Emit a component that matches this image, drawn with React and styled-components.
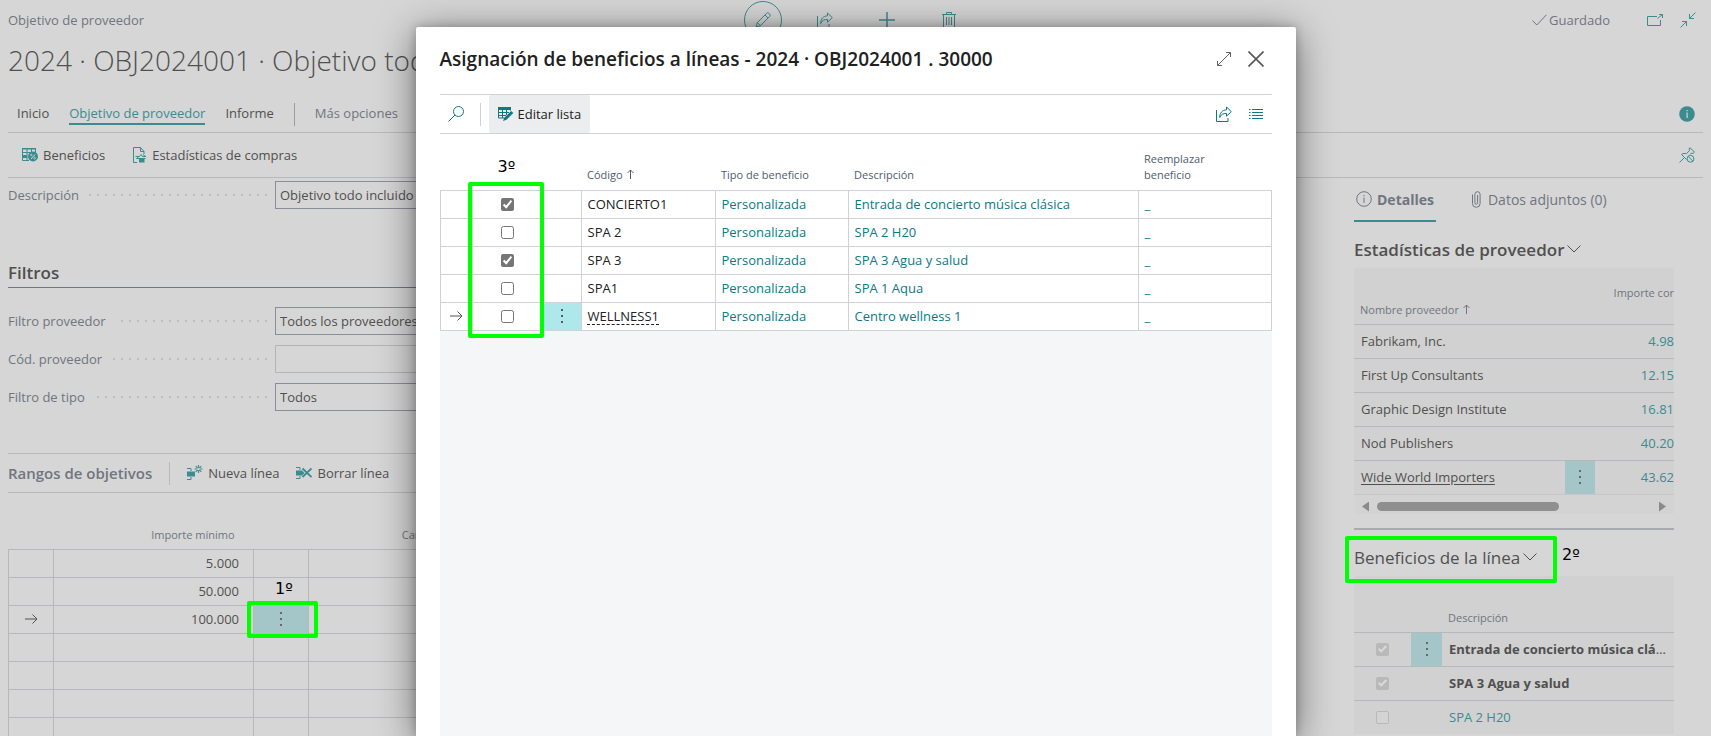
import React from "react";
import styled, { createGlobalStyle, css } from "styled-components";

const c = {
  page: "#d6d6d6",
  panel: "#d1d1d1",
  text: "#505050",
  muted: "#70757f",
  line: "#b9b9bc",
  grid: "#b7b8bd",
  teal: "#3c8b90",
  cell: "#a5c6c9",
  ink: "#212121",
  modalTeal: "#0b7a82",
  modalMuted: "#505c6d",
  modalLine: "#d0d2d8",
  mark: "#00ff00",
};

const GlobalStyle = createGlobalStyle`
  *, *::before, *::after { box-sizing: border-box; }
  body { margin: 0; background: ${c.page}; overflow: hidden; }
  body, button, input, select { font-family: "Open Sans", "Noto Sans", sans-serif; font-size: 13px; }
  button { border: 0; padding: 0; background: none; color: inherit; cursor: pointer; }
  svg { display: block; flex: none; }
`;

/* ---------- icons ---------- */

const Svg = ({ size = 16, w, h, sw = 1, children, ...rest }) => (
  <svg
    width={w || size}
    height={h || size}
    viewBox={`0 0 ${w || size} ${h || size}`}
    fill="none"
    stroke="currentColor"
    strokeWidth={sw}
    aria-hidden="true"
    {...rest}
  >
    {children}
  </svg>
);

const PencilIcon = () => (
  <Svg>
    <path d="M1 15l1.300-4.400L11.600 1.300a1.600 1.600 0 0 1 2.300 0l.8.8a1.600 1.600 0 0 1 0 2.300L5.400 13.700zM2.300 10.600l3.100 3.100M10 3l3 3" />
  </Svg>
);
const ShareIcon = () => (
  <Svg>
    <path d="M.5 4v11.5h11.5V12M10.500 1l4.800 4.600-4.800 4.600V7.500C7 7.300 5 8.500 3.700 11.500 3.700 7 6 4.200 10.500 3.800z" />
  </Svg>
);
const PlusIcon = () => (
  <Svg sw="1.5"><path d="M8 0v16M0 8h16" /></Svg>
);
const TrashIcon = () => (
  <Svg w={14} h={16}>
    <path d="M0 2.500h14M4.500 2.500v-2h5v2M1.500 2.500v13h11v-13M4.500 5v8M7 5v8M9.500 5v8" />
  </Svg>
);
const CheckIcon = () => (
  <Svg w={15} h={12}><path d="M.5 6.500L4.800 11 14.500.700" /></Svg>
);
const PopoutIcon = () => (
  <Svg>
    <path d="M10 4.500H.5v9h13V8M10.500 6.500l5-4M12 2.500h3.500V6" />
  </Svg>
);
const CollapseIcon = () => (
  <Svg>
    <path d="M15.500.5l-6 6M9.500 2v4.500H14M.5 15.500l6-6M2 9.500h4.500V14" />
  </Svg>
);
const InfoSolidIcon = () => (
  <Svg stroke="none">
    <circle cx="8" cy="8" r="7.800" fill="currentColor" />
    <path d="M7.500 4h1.200v1.300H7.500zM7.500 6.500h1.200V12H7.500z" fill={c.page} />
  </Svg>
);
const PinIcon = () => (
  <Svg>
    <path d="M.5 15.500l5-5M2.500 7.500l3.500 3.500M2.500 7.500C4 6.300 6 6.200 7.500 6.700L10.500 3.500 10 2l1-1.300 4.500 4.500L14 6.500l-1.500-.5L11 7.500M6 11l1.500 1.500" />
    <circle cx="11.500" cy="11.800" r="3.400" />
    <path d="M9.200 9.500l4.700 4.600" />
  </Svg>
);
const BenefitIcon = () => (
  <Svg>
    <path d="M.5 1.500h13V6M.5 1.500v12H7M.5 5.500h9M5 1.500v12M9.500 1.500v4" />
    <path d="M0 8h5v3H0zM0 1h14v1.500H0z" fill="currentColor" stroke="none" />
    <circle cx="11" cy="9.500" r="5" fill="currentColor" stroke="none" />
    <path d="M13 7.500l-4 4.500" stroke={c.page} />
    <circle cx="9.300" cy="8" r=".8" stroke={c.page} strokeWidth=".7" />
    <circle cx="12.700" cy="11.200" r=".8" stroke={c.page} strokeWidth=".7" />
  </Svg>
);
const ReportIcon = () => (
  <Svg w={14} h={16}>
    <path d="M4 15.500H.5V.5h7l3.500 4V7M7.500.5v4H11M2.500 9.500h4l1.500-2 1.500 2H13M10 7.500l2.500 2M5.500 10l-2 1.500h9" />
    <path d="M6 12h5.500v3.500H6z" fill="currentColor" stroke="none" />
  </Svg>
);
const NewLineIcon = () => (
  <Svg>
    <path d="M0 3.500h4V6M0 14.500h4V12" />
    <path d="M0 6.500h8v5H0z" fill="currentColor" stroke="none" />
    <path d="M11.500 0v8M7.500 4h8M8.700 1.200l5.600 5.600M14.300 1.200L8.700 6.800" strokeWidth="1.200" />
    <circle cx="11.500" cy="4" r="1.300" fill={c.page} stroke="none" />
  </Svg>
);
const DeleteLineIcon = () => (
  <Svg>
    <path d="M0 2.500h4V5M0 13.500h4V11" />
    <path d="M0 5.500h6l2.500 2.500L6 10.500H0z" fill="currentColor" stroke="none" />
    <path d="M6.500 3.500l9 8.500M15.500 3.500l-9 8.500" strokeWidth="1.800" />
  </Svg>
);
const SearchIcon = () => (
  <Svg>
    <circle cx="10.500" cy="5.500" r="5" />
    <path d="M7 9L.5 15.500" />
  </Svg>
);
const EditListIcon = () => (
  <Svg>
    <path d="M.5 1.500v10.500H6.500M.5 6.500H11M.5 9.500H8M4.500 4v8M8.500 4v5M12.500 1v3.500" />
    <path d="M0 1h13v3H0z" fill="currentColor" stroke="none" />
    <path d="M13.200 5L15.300 7 8.500 13.800l-3.500 1.200 1.300-3.300z" fill="currentColor" stroke="none" />
  </Svg>
);
const ListIcon = () => (
  <Svg>
    <path d="M1 3.500h1.500M4 3.500h11M1 6.500h1.500M4 6.500h11M1 9.500h1.500M4 9.500h11M1 12.500h1.500M4 12.500h11" />
  </Svg>
);
const ExpandIcon = () => (
  <Svg><path d="M1.500 14.500L14.500 1.500M10 1.500h4.500V6M1.500 10v4.500H6" /></Svg>
);
const CloseIcon = () => (
  <Svg sw="1.600"><path d="M.5.5l15 15M15.500.5l-15 15" /></Svg>
);
const ArrowIcon = () => (
  <Svg w={13} h={10}><path d="M0 5h12M7.500.5L12 5 7.500 9.500" /></Svg>
);
const SortIcon = () => (
  <Svg w={7} h={10}><path d="M3.500 10V1M.5 4l3-3 3 3" /></Svg>
);
const ChevronIcon = () => (
  <Svg w={14} h={8}><path d="M.5.5L7 7 13.500.5" /></Svg>
);
const InfoIcon = () => (
  <Svg>
    <circle cx="8" cy="8" r="7.300" />
    <path d="M8 4v1.300M8 6.500V12" />
  </Svg>
);
const ClipIcon = () => (
  <Svg w={9} h={17}>
    <path d="M.5 3.500v9a3.800 3.800 0 0 0 7.600 0V3.300a2.600 2.600 0 0 0-5.200 0v8.500a1.300 1.300 0 0 0 2.700 0V4" />
  </Svg>
);
const DotsIcon = () => (
  <Svg w={2} h={14} stroke="none" fill="currentColor">
    <path d="M0 0h2v2H0zM0 6h2v2H0zM0 12h2v2H0z" />
  </Svg>
);

/* ---------- page behind the dialog ---------- */

const Shell = styled.div`
  position: relative;
  height: 100vh;
  overflow: hidden;
  background: ${c.page};
  color: ${c.text};
`;

const Page = styled.div`
  display: flex;
  flex-direction: column;
  height: 100%;
  padding: 0 8px;
`;

const TopBar = styled.header`
  display: flex;
  align-items: center;
  height: 40px;
  flex: none;
  color: ${c.muted};
`;

const Side = styled.div`
  flex: 1;
  display: flex;
  align-items: center;
  gap: 17px;
  justify-content: ${(p) => (p.$end ? "flex-end" : "flex-start")};
  padding-right: 7px;
`;

const PageActions = styled.div`
  display: flex;
  align-items: center;
  gap: 24px;
`;

const IconButton = styled.button`
  display: flex;
  align-items: center;
  justify-content: center;
  width: ${(p) => p.$size || 16}px;
  height: ${(p) => p.$size || 16}px;
  color: ${(p) => p.$color || c.teal};
  ${(p) => p.$ring && css`
    border: 1px solid ${c.teal};
    border-radius: 50%;
  `}
`;

const Saved = styled.span`
  display: flex;
  align-items: center;
  gap: 2px;
  margin-right: 20px;
`;

const PageTitle = styled.h1`
  margin: 0;
  height: 56px;
  flex: none;
  font-size: 28px;
  font-weight: 300;
  line-height: 40px;
  white-space: nowrap;
`;

const TabBar = styled.nav`
  display: flex;
  align-items: center;
  height: 37px;
  flex: none;
  padding: 0 8px 0 9px;
  border-bottom: 1px solid ${c.line};
  gap: 20px;
`;

const Tab = styled.a`
  color: ${(p) => (p.$active ? c.teal : p.$quiet ? c.muted : c.text)};
  text-decoration: none;
  line-height: 20px;
  border-bottom: 2px solid ${(p) => (p.$active ? c.teal : "transparent")};
  &:last-of-type { margin-right: auto; }
`;

const Separator = styled.span`
  width: 1px;
  height: 23px;
  background: ${(p) => p.$color || c.line};
`;

const ActionBar = styled.div`
  display: flex;
  align-items: center;
  height: 45px;
  flex: none;
  padding: 0 8px 0 14px;
  gap: 28px;
  border-bottom: 1px solid ${c.line};
  & > :last-child { margin-left: auto; }
`;

const Action = styled.button`
  display: flex;
  align-items: center;
  gap: 5px;
  white-space: nowrap;
  svg { color: ${c.teal}; }
`;

const Body = styled.div`
  display: flex;
  flex: 1;
  min-height: 0;
  gap: 64px;
  padding-right: 29px;
`;

const Main = styled.main`
  flex: 1;
  min-width: 0;
  overflow: hidden;
`;

const Fields = styled.div`
  display: flex;
  flex-direction: column;
  gap: 10px;
  width: 50%;
  padding-top: ${(p) => p.$top}px;
`;

const Field = styled.div`
  display: flex;
  align-items: center;
  height: 28px;
`;

const FieldLabel = styled.label`
  display: flex;
  align-items: center;
  gap: 10px;
  width: 267px;
  padding-right: 8px;
  color: ${c.muted};
  &::after {
    content: "";
    flex: 1;
    height: 2px;
    background: repeating-linear-gradient(270deg, #bcbcbc 0 2px, transparent 2px 8px);
  }
`;

const control = css`
  flex: 1;
  min-width: 0;
  height: 28px;
  padding: 0 4px;
  border: 1px solid ${(p) => (p.$empty ? "#b4b5b8" : "#8a8e96")};
  border-radius: 0;
  background: transparent;
  color: ${c.text};
  appearance: none;
`;
const TextInput = styled.input`${control}`;
const Select = styled.select`${control}`;

const GroupTitle = styled.h2`
  margin: 52px 0 0;
  padding-bottom: 2px;
  font-size: 17px;
  font-weight: 600;
  line-height: 24px;
  color: ${c.text};
  border-bottom: 1px solid ${c.muted};
`;

const PartBar = styled.div`
  display: flex;
  align-items: center;
  height: 40px;
  margin-top: 42px;
  border-top: 1px solid ${c.line};
  border-bottom: 1px solid ${c.line};
  gap: 17px;
`;

const PartTitle = styled.h2`
  margin: 0;
  font-size: 15px;
  font-weight: 600;
  color: ${c.muted};
`;

const RangeTable = styled.table`
  width: 1300px;
  table-layout: fixed;
  border-collapse: collapse;
  th {
    height: 56px;
    padding: 0 19px 7px 8px;
    vertical-align: bottom;
    text-align: right;
    font-size: 11px;
    font-weight: 400;
    color: ${c.muted};
  }
  td {
    height: 28px;
    padding: 0 14px;
    border: 1px solid ${c.grid};
    text-align: right;
  }
  td:first-child svg { margin: 0 auto; }
`;

const MenuCell = styled.td`
  && {
    position: relative;
    padding: 0;
    background: ${(p) => (p.$on ? p.$tone || c.cell : "transparent")};
  }
`;

const MenuButton = styled.button`
  display: flex;
  align-items: center;
  justify-content: center;
  width: 100%;
  height: 27px;
  color: ${(p) => p.$color || "#686868"};
`;

/* ---------- fact boxes ---------- */

const Facts = styled.aside`
  width: 320px;
  flex: none;
`;

const FactTabs = styled.div`
  display: flex;
  gap: 34px;
`;

const FactTab = styled.button`
  display: flex;
  align-items: center;
  gap: ${(p) => (p.$active ? 5 : 7)}px;
  height: 44px;
  padding: 0 2px;
  border-bottom: 2px solid ${(p) => (p.$active ? c.teal : "transparent")};
  font-size: 14px;
  font-weight: ${(p) => (p.$active ? 700 : 400)};
  color: ${c.muted};
  white-space: nowrap;
`;

const FactHeading = styled.div`
  position: relative;
  display: flex;
  align-items: center;
  height: 46px;
  padding-top: 8px;
  h2 {
    margin: 0;
    font-size: 17px;
    font-weight: ${(p) => p.$weight};
    white-space: nowrap;
  }
  button {
    display: flex;
    align-items: center;
    gap: 3px;
    color: ${c.text};
  }
`;

const FactTable = styled.table`
  width: 100%;
  table-layout: fixed;
  border-collapse: collapse;
  background: ${c.panel};
  th {
    height: 56px;
    padding: 0 6px 7px;
    vertical-align: bottom;
    text-align: left;
    font-size: 11px;
    font-weight: 400;
    color: ${c.muted};
    white-space: nowrap;
    svg { display: inline; margin-left: 1px; }
  }
  th.num { padding: 0 0 24px; text-align: right; }
  td {
    height: 34px;
    padding: 0 4px 0 7px;
    border-top: 1px solid ${c.grid};
    overflow: hidden;
    text-overflow: ellipsis;
    white-space: nowrap;
  }
  td.num { padding-right: 0; text-align: right; color: ${c.teal}; }
  td.check { padding: 0; }
  ${MenuButton} { height: 33px; }
  a { color: inherit; text-underline-offset: 2px; }
`;

const LockedCheck = styled.input`
  display: block;
  position: relative;
  width: 13px;
  height: 13px;
  margin: 0 auto;
  appearance: none;
  border: 1px solid #b9b9b9;
  border-radius: 2px;
  background: #d4d4d4;
  &:checked { background: #b9b9b9; }
  &:checked::before {
    content: "";
    position: absolute;
    inset: 1px;
    background: #dadada;
    clip-path: polygon(0 55%, 16% 38%, 36% 60%, 84% 8%, 100% 24%, 36% 92%);
  }
`;

const Strong = styled.strong`
  font-weight: 700;
`;
const TealText = styled.a`
  && { color: ${c.teal}; text-decoration: none; }
`;

const ScrollRow = styled.div`
  display: flex;
  align-items: center;
  height: 20px;
  padding: 4px 8px 0;
  gap: 8px;
  background: #d3d3d3;
  border-top: 1px solid #c6c6c8;
`;
const ScrollThumb = styled.div`
  width: 182px;
  height: 9px;
  margin-right: auto;
  border-radius: 5px;
  background: #8f8f8f;
`;
const ScrollArrow = styled.button`
  width: 7px;
  height: 10px;
  background: #8a8a8a;
  clip-path: ${(p) => (p.$right ? "polygon(0 0, 100% 50%, 0 100%)" : "polygon(100% 0, 0 50%, 100% 100%)")};
`;

const FactRule = styled.div`
  height: 2px;
  margin-top: 14px;
  background: #a8abb0;
`;

/* ---------- dialog ---------- */

const Dialog = styled.section`
  position: absolute;
  top: 27px;
  left: 50%;
  bottom: 0;
  width: 880px;
  margin-left: -440px;
  display: flex;
  flex-direction: column;
  padding: 0 24px;
  background: #fff;
  color: ${c.ink};
  border-radius: 2px 2px 0 0;
  box-shadow: 0 6px 38px rgba(0, 0, 0, 0.5), 0 0 10px rgba(0, 0, 0, 0.22);
`;

const DialogHead = styled.div`
  display: flex;
  align-items: center;
  height: 67px;
  flex: none;
  padding: 0 8px 3px 0;
  gap: 16px;
  h2 {
    flex: 1;
    margin: 0;
    font-size: 19px;
    font-weight: 600;
    white-space: nowrap;
  }
`;

const DialogTools = styled.div`
  display: flex;
  align-items: center;
  height: 40px;
  flex: none;
  padding: 0 8px;
  gap: 16px;
  border-top: 1px solid ${c.modalLine};
  border-bottom: 1px solid ${c.modalLine};
`;

const EditButton = styled.button`
  display: flex;
  align-items: center;
  gap: 4px;
  height: 38px;
  margin: 0 auto 0 -8px;
  padding: 0 9px;
  background: #ebedef;
  border-radius: 2px;
  white-space: nowrap;
  svg { color: ${c.modalTeal}; }
`;

const DialogBody = styled.div`
  position: relative;
  flex: 1;
  background: #f5f6f8;
`;

const BenefitTable = styled.table`
  width: 100%;
  table-layout: fixed;
  border-collapse: collapse;
  background: #fff;
  th {
    height: 56px;
    padding: 0 6px 7px;
    vertical-align: bottom;
    text-align: left;
    font-size: 11px;
    line-height: 16px;
    font-weight: 400;
    color: ${c.modalMuted};
    svg { display: inline; margin-left: 1px; }
  }
  td {
    height: 28px;
    padding: 0 6px;
    border: 1px solid ${c.modalLine};
    white-space: nowrap;
  }
  td.check { padding: 0; border-right: 0; }
  td.check input { display: block; margin: 0 auto; accent-color: #767676; }
  td.check + td { border-left: 0; }
  td:first-child { padding: 0; color: #555; }
  td:first-child svg { margin: 0 auto; }
`;

const CellLink = styled.a`
  color: ${c.modalTeal};
  text-decoration: none;
`;

const FocusLink = styled.a`
  color: ${c.ink};
  text-decoration: underline dashed 1px;
  text-underline-offset: 3px;
`;

/* ---------- numbered highlights laid over the page ---------- */

const Mark = styled.span`
  position: absolute;
  inset: ${(p) => p.$inset};
  width: ${(p) => (p.$width ? `${p.$width}px` : "auto")};
  height: ${(p) => (p.$height ? `${p.$height}px` : "auto")};
  border: 4px solid ${c.mark};
  border-radius: 2px;
  pointer-events: none;
`;

const StepLabel = styled.span`
  position: absolute;
  inset: ${(p) => p.$inset};
  font-family: "DejaVu Sans", sans-serif;
  font-size: 16px;
  line-height: 20px;
  color: #000;
  white-space: nowrap;
  pointer-events: none;
`;

const Col = styled.col`
  width: ${(p) => (p.$w ? `${p.$w}px` : "auto")};
`;

const benefits = [
  { code: "CONCIERTO1", text: "Entrada de concierto música clásica", on: true },
  { code: "SPA 2", text: "SPA 2 H20" },
  { code: "SPA 3", text: "SPA 3 Agua y salud", on: true },
  { code: "SPA1", text: "SPA 1 Aqua" },
  { code: "WELLNESS1", text: "Centro wellness 1", current: true },
];

const vendors = [
  ["Fabrikam, Inc.", "4.98"],
  ["First Up Consultants", "12.15"],
  ["Graphic Design Institute", "16.81"],
  ["Nod Publishers", "40.20"],
  ["Wide World Importers", "43.62"],
];

const lineBenefits = [
  { text: "Entrada de concierto música clásica", on: true, current: true },
  { text: "SPA 3 Agua y salud", on: true },
  { text: "SPA 2 H20" },
];

const ranges = ["5.000", "50.000", "100.000", "", "", "", ""];

function BenefitDialog() {
  return (
    <Dialog role="dialog" aria-labelledby="dialog-title">
      <DialogHead>
        <h2 id="dialog-title">Asignación de beneficios a líneas - 2024 · OBJ2024001 . 30000</h2>
        <IconButton $color="#666" aria-label="Expandir"><ExpandIcon /></IconButton>
        <IconButton $color="#555" aria-label="Cerrar"><CloseIcon /></IconButton>
      </DialogHead>
      <DialogTools>
        <IconButton $color={c.modalTeal} aria-label="Buscar"><SearchIcon /></IconButton>
        <Separator $color={c.modalLine} />
        <EditButton><EditListIcon />Editar lista</EditButton>
        <IconButton $color={c.modalTeal} aria-label="Compartir"><ShareIcon /></IconButton>
        <IconButton $color={c.modalTeal} aria-label="Vista"><ListIcon /></IconButton>
      </DialogTools>
      <DialogBody>
        <BenefitTable>
          <colgroup>
            <Col $w={32} /><Col $w={71} /><Col $w={38} /><Col $w={134} />
            <Col $w={133} /><Col $w={290} /><Col />
          </colgroup>
          <thead>
            <tr>
              <th /><th /><th />
              <th>Código <SortIcon /></th>
              <th>Tipo de beneficio</th>
              <th>Descripción</th>
              <th>Reemplazar<br />beneficio</th>
            </tr>
          </thead>
          <tbody>
            {benefits.map((b) => (
              <tr key={b.code}>
                <td>{b.current && <ArrowIcon />}</td>
                <td className="check">
                  <input type="checkbox" aria-label={b.code} defaultChecked={b.on} />
                </td>
                <MenuCell $on={b.current} $tone="#afe8eb">
                  {b.current && (
                    <MenuButton $color={c.modalMuted} aria-label="Más opciones"><DotsIcon /></MenuButton>
                  )}
                </MenuCell>
                <td>{b.current ? <FocusLink href="#">{b.code}</FocusLink> : b.code}</td>
                <td><CellLink href="#">Personalizada</CellLink></td>
                <td><CellLink href="#">{b.text}</CellLink></td>
                <td><CellLink href="#">_</CellLink></td>
              </tr>
            ))}
          </tbody>
        </BenefitTable>
        <Mark $inset="48px auto auto 28px" $width={76} $height={156} />
        <StepLabel $inset="23px auto auto 58px">3º</StepLabel>
      </DialogBody>
    </Dialog>
  );
}

function FactBoxes() {
  return (
    <Facts>
      <FactTabs>
        <FactTab $active><InfoIcon />Detalles</FactTab>
        <FactTab><ClipIcon />Datos adjuntos (0)</FactTab>
      </FactTabs>
      <FactHeading $weight={600}>
        <button><h2>Estadísticas de proveedor</h2><ChevronIcon /></button>
      </FactHeading>
      <FactTable>
        <colgroup><Col $w={211} /><Col $w={30} /><Col /></colgroup>
        <thead>
          <tr>
            <th>Nombre proveedor <SortIcon /></th>
            <th />
            <th className="num">Importe cor</th>
          </tr>
        </thead>
        <tbody>
          {vendors.map(([name, amount], i) => (
            <tr key={name}>
              <td>{i === 4 ? <a href="#">{name}</a> : name}</td>
              <MenuCell $on={i === 4}>
                {i === 4 && <MenuButton aria-label="Más opciones"><DotsIcon /></MenuButton>}
              </MenuCell>
              <td className="num">{amount}</td>
            </tr>
          ))}
        </tbody>
      </FactTable>
      <ScrollRow>
        <ScrollArrow aria-label="Desplazar a la izquierda" />
        <ScrollThumb />
        <ScrollArrow $right aria-label="Desplazar a la derecha" />
      </ScrollRow>
      <FactRule />
      <FactHeading $weight={500}>
        <button><h2>Beneficios de la línea</h2><ChevronIcon /></button>
        <Mark $inset="6px auto auto -9px" $width={212} $height={47} />
        <StepLabel $inset="15px auto auto 208px">2º</StepLabel>
      </FactHeading>
      <FactTable>
        <colgroup><Col $w={57} /><Col $w={31} /><Col /></colgroup>
        <thead>
          <tr><th /><th /><th>Descripción</th></tr>
        </thead>
        <tbody>
          {lineBenefits.map((b) => (
            <tr key={b.text}>
              <td className="check">
                <LockedCheck type="checkbox" aria-label={b.text} defaultChecked={b.on} disabled />
              </td>
              <MenuCell $on={b.current}>
                {b.current && <MenuButton aria-label="Más opciones"><DotsIcon /></MenuButton>}
              </MenuCell>
              <td>{b.on ? <Strong>{b.text}</Strong> : <TealText href="#">{b.text}</TealText>}</td>
            </tr>
          ))}
        </tbody>
      </FactTable>
    </Facts>
  );
}

export default function App() {
  return (
    <Shell>
      <GlobalStyle />
      <Page>
        <TopBar>
          <Side>Objetivo de proveedor</Side>
          <PageActions>
            <IconButton $size={38} $ring aria-label="Editar"><PencilIcon /></IconButton>
            <IconButton $size={38} aria-label="Compartir"><ShareIcon /></IconButton>
            <IconButton $size={38} aria-label="Nuevo"><PlusIcon /></IconButton>
            <IconButton $size={38} aria-label="Eliminar"><TrashIcon /></IconButton>
          </PageActions>
          <Side $end>
            <Saved><CheckIcon />Guardado</Saved>
            <IconButton aria-label="Abrir en ventana nueva"><PopoutIcon /></IconButton>
            <IconButton aria-label="Contraer"><CollapseIcon /></IconButton>
          </Side>
        </TopBar>
        <PageTitle>2024 · OBJ2024001 · Objetivo todo incluido</PageTitle>
        <TabBar>
          <Tab href="#">Inicio</Tab>
          <Tab href="#" $active>Objetivo de proveedor</Tab>
          <Tab href="#">Informe</Tab>
          <Separator $color="#9b9ca0" />
          <Tab href="#" $quiet>Más opciones</Tab>
          <IconButton aria-label="Información"><InfoSolidIcon /></IconButton>
        </TabBar>
        <ActionBar>
          <Action><BenefitIcon />Beneficios</Action>
          <Action><ReportIcon />Estadísticas de compras</Action>
          <IconButton aria-label="Anclar"><PinIcon /></IconButton>
        </ActionBar>
        <Body>
          <Main>
            <Fields $top={3}>
              <Field>
                <FieldLabel htmlFor="desc">Descripción</FieldLabel>
                <TextInput id="desc" defaultValue="Objetivo todo incluido" />
              </Field>
            </Fields>
            <GroupTitle>Filtros</GroupTitle>
            <Fields $top={19}>
              <Field>
                <FieldLabel htmlFor="vendor-filter">Filtro proveedor</FieldLabel>
                <Select id="vendor-filter"><option>Todos los proveedores</option></Select>
              </Field>
              <Field>
                <FieldLabel htmlFor="vendor-code">Cód. proveedor</FieldLabel>
                <TextInput id="vendor-code" $empty />
              </Field>
              <Field>
                <FieldLabel htmlFor="type-filter">Filtro de tipo</FieldLabel>
                <Select id="type-filter"><option>Todos</option></Select>
              </Field>
            </Fields>
            <PartBar>
              <PartTitle>Rangos de objetivos</PartTitle>
              <Separator />
              <Action><NewLineIcon />Nueva línea</Action>
              <Action><DeleteLineIcon />Borrar línea</Action>
            </PartBar>
            <RangeTable>
              <colgroup>
                <Col $w={45} /><Col $w={200} /><Col $w={55} /><Col $w={200} /><Col />
              </colgroup>
              <thead>
                <tr><th /><th>Importe mínimo</th><th /><th>Cantidad mínima</th><th /></tr>
              </thead>
              <tbody>
                {ranges.map((amount, i) => (
                  <tr key={i}>
                    <td>{i === 2 && <ArrowIcon />}</td>
                    <td>{amount}</td>
                    <MenuCell $on={i === 2}>
                      {i === 2 && (
                        <>
                          <MenuButton aria-label="Más opciones"><DotsIcon /></MenuButton>
                          <Mark $inset="-5px -10px -5px -7px" />
                          <StepLabel $inset="-27px auto auto 21px">1º</StepLabel>
                        </>
                      )}
                    </MenuCell>
                    <td />
                    <td />
                  </tr>
                ))}
              </tbody>
            </RangeTable>
          </Main>
          <FactBoxes />
        </Body>
      </Page>
      <BenefitDialog />
    </Shell>
  );
}
